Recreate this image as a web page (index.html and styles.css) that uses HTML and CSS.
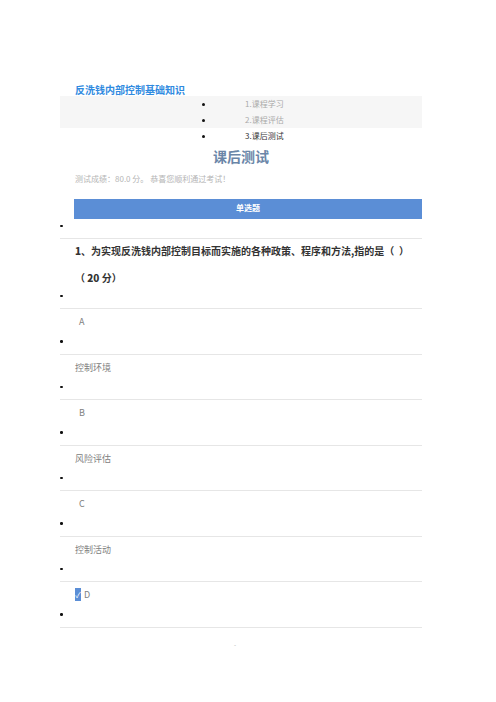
FILE: index.html
```html
<!DOCTYPE html>
<html lang="zh">
<head>
<meta charset="utf-8">
<title>课后测试</title>
<link rel="stylesheet" href="styles.css">
</head>
<body>
<div class="page">
  <h1 class="course-title">反洗钱内部控制基础知识</h1>
  <div class="steps">
    <div class="steps-band">
      <div class="step">1.课程学习</div>
      <div class="step">2.课程评估</div>
    </div>
    <div class="step step-current">3.课后测试</div>
  </div>
  <h2 class="test-title">课后测试</h2>
  <p class="score">测试成绩：80.0 分。 恭喜您顺利通过考试！</p>
  <div class="type-bar">单选题</div>

  <div class="dotrow"></div>
  <div class="question"><b>1</b>、为实现反洗钱内部控制目标而实施的各种政策、程序和方法,指的是（ &nbsp;）<br>（ <b>20</b> 分）</div>
  <div class="dotrow"></div>
  <div class="opt opt-letter">A</div>
  <div class="dotrow"></div>
  <div class="opt">控制环境</div>
  <div class="dotrow"></div>
  <div class="opt opt-letter">B</div>
  <div class="dotrow"></div>
  <div class="opt">风险评估</div>
  <div class="dotrow"></div>
  <div class="opt opt-letter">C</div>
  <div class="dotrow"></div>
  <div class="opt">控制活动</div>
  <div class="dotrow"></div>
  <div class="opt opt-checked"><span class="check">✓</span>D</div>
  <div class="dotrow"></div>
  <div class="foot">-</div>
</div>
</body>
</html>
```

FILE: styles.css
```css
html, body {
  margin: 0;
  padding: 0;
  background: #ffffff;
}
body {
  font-family: "Noto Sans CJK SC", "Noto Sans", sans-serif;
  color: #333;
}
.page {
  width: 362px;
  margin-left: 60px;
  padding-top: 84px;
}
.course-title {
  margin: 0;
  padding-left: 15px;
  font-size: 10px;
  line-height: 12px;
  font-weight: 700;
  color: #2f8ae0;
}
.steps {
  font-size: 8px;
}
.steps-band {
  background: #f6f6f6;
}
.step {
  height: 16px;
  line-height: 16px;
  padding-left: 185px;
  color: #aaa;
  position: relative;
}
.step::before {
  content: "";
  position: absolute;
  left: 142px;
  top: 7px;
  width: 3px;
  height: 3px;
  border-radius: 50%;
  background: #111;
}
.step-current {
  color: #333;
}
.test-title {
  margin: 2px 0 0;
  text-align: center;
  font-size: 14px;
  line-height: 20px;
  font-weight: 700;
  color: #6a86a8;
}
.score {
  margin: 7px 0 0;
  padding-left: 15px;
  font-size: 8px;
  line-height: 12px;
  color: #b5b5b5;
}
.type-bar {
  margin: 14px 0 0 14px;
  height: 20px;
  line-height: 18px;
  background: #5b8ed6;
  color: #fff;
  font-size: 8px;
  font-weight: 700;
  text-align: center;
}
.dotrow {
  border-bottom: 1px solid #e6e6e6;
  position: relative;
  box-sizing: border-box;
  height: 20px;
}
.dotrow::before {
  content: "";
  position: absolute;
  left: 0;
  top: 5.5px;
  width: 2.5px;
  height: 2.5px;
  border-radius: 50%;
  background: #111;
}
.question {
  margin-top: -2px;
  height: 52px;
  padding-left: 15px;
  font-size: 10px;
  line-height: 27px;
  font-weight: 700;
  color: #333;
  white-space: nowrap;
}
.opt {
  height: 25.5px;
  line-height: 25px;
  padding-left: 15px;
  font-size: 9px;
  color: #808080;
}
.opt-letter {
  padding-left: 19px;
}
.opt-checked {
  display: flex;
  align-items: center;
}
.check {
  display: inline-block;
  width: 6px;
  height: 13px;
  line-height: 13px;
  margin-right: 3px;
  background: #5b8ed6;
  color: #fff;
  font-size: 8px;
  text-align: center;
}
.foot {
  margin-top: 12px;
  text-align: center;
  font-size: 6px;
  color: #aaa;
  padding-right: 12px;
}
```
